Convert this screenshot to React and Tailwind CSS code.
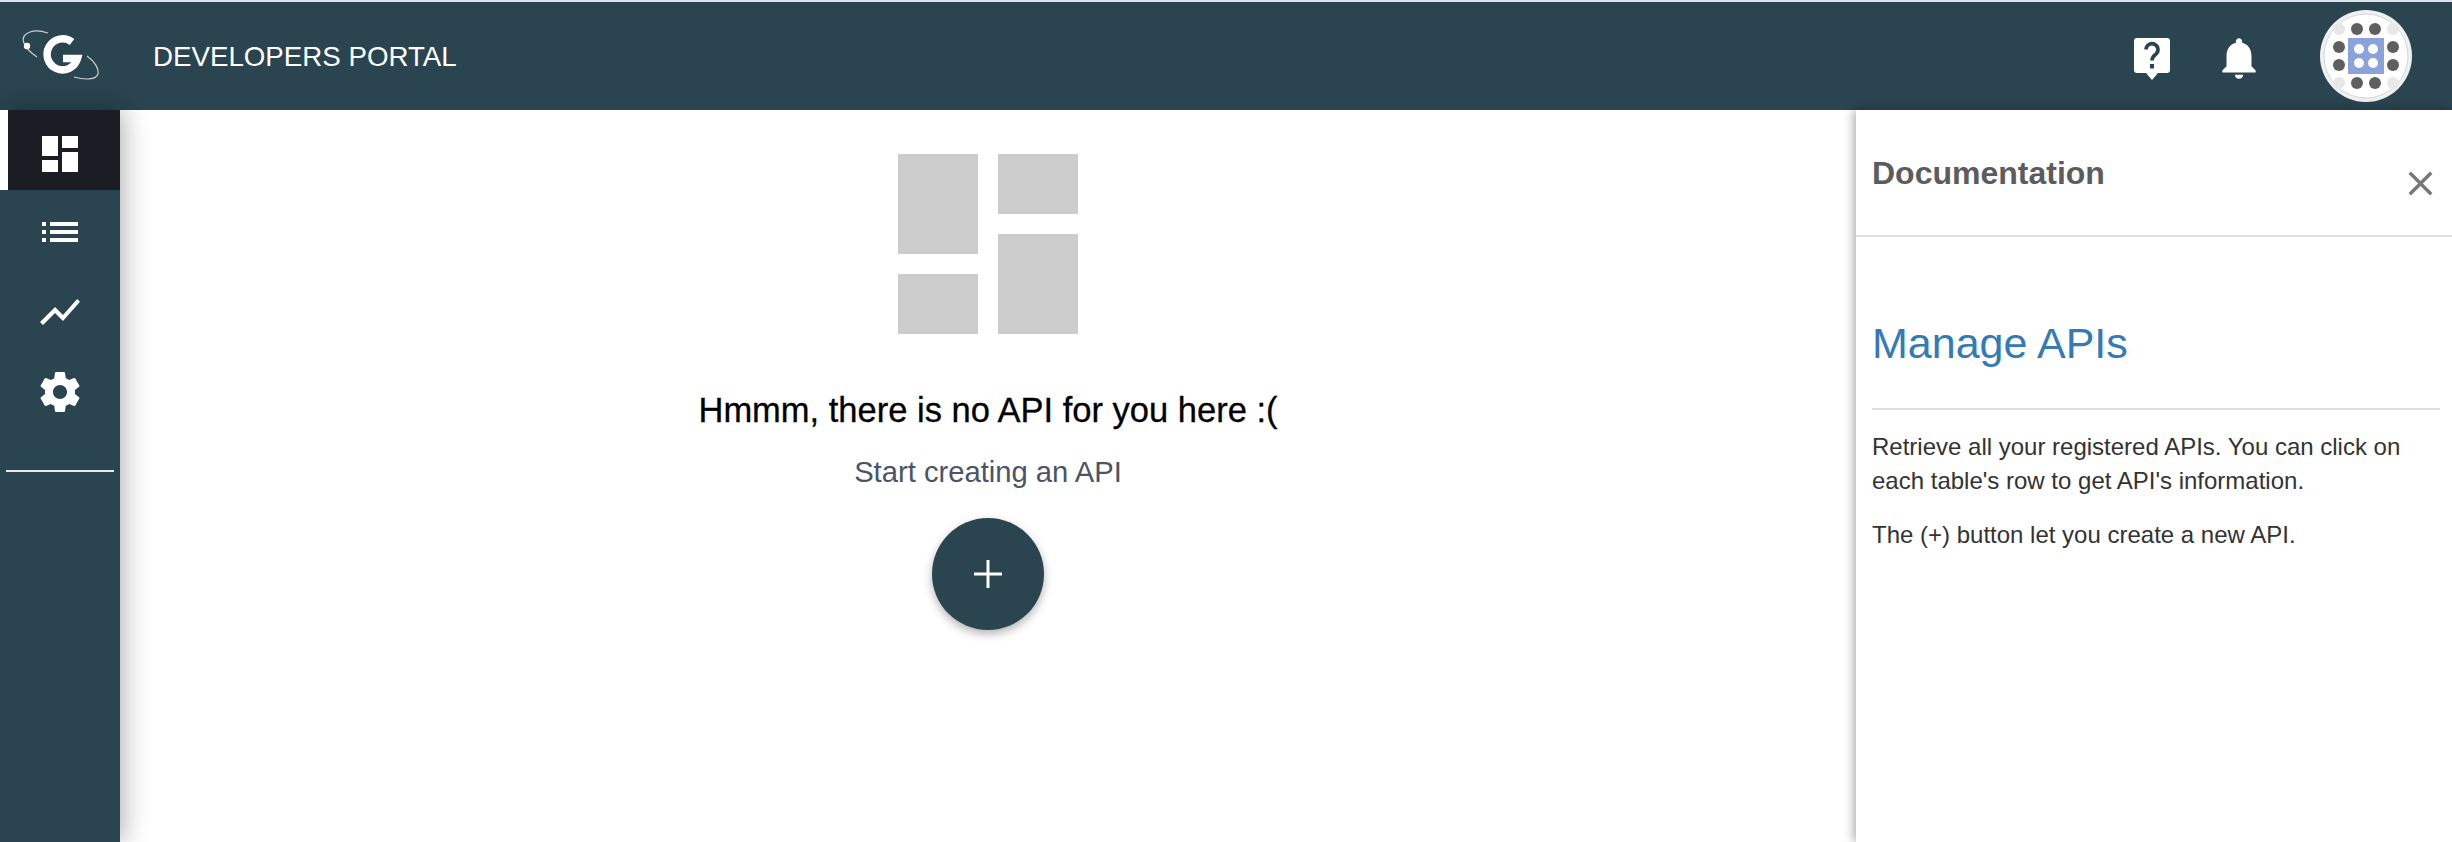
const DASHBOARD = 'M3 13h8V3H3v10zm0 8h8v-6H3v6zm10 0h8V11h-8v10zm0-18v6h8V3h-8z'
const PLUS = 'M19 12.75h-6.25V19h-1.5v-6.25H5v-1.5h6.25V5h1.5v6.25H19z'
const CLOSE = 'M19 6.41L17.59 5 12 10.59 6.41 5 5 6.41 10.59 12 5 17.59 6.41 19 12 13.41 17.59 19 19 17.59 13.41 12z'

function MdIcon({ d, className }) {
  return (
    <svg viewBox="0 0 24 24" className={className} fill="currentColor">
      <path d={d} />
    </svg>
  )
}

function Logo() {
  return (
    <svg viewBox="0 0 95 70" className="w-[95px] h-[70px]" fill="none" stroke="#fff">
      <path d="M33 13 C27 11 20 10 15 12 C9 14 7 18 9 23 C11 28 16 33 22 37" strokeWidth="1.2" opacity="0.75" />
      <circle cx="12" cy="26" r="3.2" fill="#fff" stroke="none" />
      <path d="M57 22 A15.5 15.5 0 1 0 62.5 38.500 L48 38.500" strokeWidth="7.5" />
      <path d="M72 36 C79 41 84 48 83 54 C81 60 70 60 59 57" strokeWidth="1.2" opacity="0.75" />
    </svg>
  )
}

function Avatar() {
  const dots = [
    [37, 19], [55, 19], [19, 37], [73, 37], [19, 55], [73, 55], [37, 73], [55, 73],
  ]
  const faded = [[19, 19], [73, 19], [19, 73], [73, 73]]
  const inner = [[39, 39], [53, 39], [39, 53], [53, 53]]
  return (
    <svg viewBox="0 0 92 92" className="w-[92px] h-[92px]">
      <circle cx="46" cy="46" r="46" fill="#f0f0f0" />
      <circle cx="46" cy="46" r="42" fill="#fff" stroke="#cfd8dc" strokeWidth="1" />
      {faded.map(([x, y]) => <circle key={`${x}-${y}`} cx={x} cy={y} r="6" fill="#e8e8e8" />)}
      {dots.map(([x, y]) => <circle key={`${x}-${y}`} cx={x} cy={y} r="6" fill="#5f5f5f" />)}
      <rect x="28" y="28" width="36" height="36" fill="#8aa4da" />
      {inner.map(([x, y]) => <circle key={`${x}-${y}`} cx={x} cy={y} r="5" fill="#fff" />)}
    </svg>
  )
}

export default function App() {
  return (
    <div className="h-[842px] flex flex-col overflow-hidden bg-white font-['Liberation_Sans',sans-serif]">
      <div className="h-[2px] shrink-0 bg-[#dfe3e6]" />
      <header className="h-[108px] shrink-0 flex items-center bg-[#2a4450] text-white">
        <div className="ml-[15px] mt-[-2px]"><Logo /></div>
        <span className="ml-[43px] text-[27.7px] mt-[1px]">DEVELOPERS PORTAL</span>
        <div className="ml-auto flex items-center">
          <svg viewBox="0 0 36 43" className="w-[36px] h-[43px] mt-[6px]">
            <path d="M3 0h30a3 3 0 0 1 3 3v29a3 3 0 0 1-3 3h-9l-6 7-6-7H3a3 3 0 0 1-3-3V3a3 3 0 0 1 3-3z" fill="#fff" />
            <path d="M12 11.5a6 6 0 1 1 9.5 5c-2.500 1.800-3.500 3-3.500 6" fill="none" stroke="#2a4450" strokeWidth="3.6" />
            <rect x="16" y="26" width="4" height="4.500" fill="#2a4450" />
          </svg>
          <MdIcon
            d="M12 22c1.100 0 2-.9 2-2h-4c0 1.100.9 2 2 2zm6-6v-5c0-3.070-1.630-5.640-4.500-6.320V4c0-.83-.67-1.500-1.500-1.500s-1.500.67-1.500 1.500v.68C7.640 5.360 6 7.920 6 11v5l-2 2v1h16v-1l-2-2z"
            className="ml-[44px] mr-[56px] w-[50px] h-[50px] mt-[4px] text-white"
          />
          <div className="mr-[40px]"><Avatar /></div>
        </div>
      </header>

      <div className="flex-1 flex min-h-0">
        <nav className="relative z-10 w-[120px] shrink-0 bg-[#2a4450] text-white shadow-[4px_0_24px_rgba(0,0,0,0.3)]">
          <div className="h-[80px] border-l-[8px] border-white bg-[#1c1c24] flex items-center justify-center pr-[8px] pt-[8px]">
            <MdIcon d={DASHBOARD} className="w-[48px] h-[48px]" />
          </div>
          <div className="h-[80px] flex items-center justify-center pt-[4px]">
            <svg viewBox="0 0 36 20" className="w-[36px] h-[20px]" fill="currentColor">
              <rect width="4" height="4" />
              <rect x="8" width="28" height="4" />
              <rect y="8" width="4" height="4" />
              <rect x="8" y="8" width="28" height="4" />
              <rect y="16" width="4" height="4" />
              <rect x="8" y="16" width="28" height="4" />
            </svg>
          </div>
          <div className="h-[80px] flex items-center justify-center pt-[4px]">
            <MdIcon d="M3.500 18.490l6-6.010 4 4L22 6.920l-1.410-1.410-7.090 7.970-4-4L2 16.990z" className="w-[48px] h-[48px]" />
          </div>
          <div className="h-[80px] flex items-center justify-center pt-[4px]">
            <MdIcon d="M19.430 12.980c.04-.32.07-.64.07-.98s-.03-.66-.07-.98l2.110-1.650c.19-.15.24-.42.12-.64l-2-3.460c-.12-.22-.39-.3-.61-.22l-2.490 1c-.52-.4-1.080-.73-1.690-.98l-.38-2.650C14.460 2.180 14.250 2 14 2h-4c-.25 0-.46.18-.49.42l-.38 2.650c-.61.25-1.170.59-1.690.98l-2.490-1c-.23-.09-.49 0-.61.22l-2 3.460c-.13.22-.07.49.12.64l2.110 1.650c-.04.32-.07.65-.07.98s.03.66.07.98l-2.110 1.650c-.19.15-.24.42-.12.64l2 3.460c.12.22.39.3.61.22l2.490-1c.52.4 1.080.73 1.690.98l.38 2.650c.03.24.24.42.49.42h4c.25 0 .46-.18.49-.42l.38-2.650c.61-.25 1.170-.59 1.690-.98l2.490 1c.23.09.49 0 .61-.22l2-3.460c.12-.22.07-.49-.12-.64l-2.110-1.650zM12 15.500c-1.930 0-3.500-1.570-3.500-3.500s1.570-3.500 3.500-3.500 3.500 1.570 3.500 3.500-1.570 3.500-3.500 3.500z" className="w-[48px] h-[48px]" />
          </div>
          <div className="mt-[40px] mx-[6px] h-[2px] bg-[#e8e8e8]" />
        </nav>

        <main className="flex-1 min-w-0 flex flex-col items-center pt-[14px]">
          <MdIcon d={DASHBOARD} className="w-[240px] h-[240px] text-[#cccccc]" />
          <h1 className="mt-[24px] text-[34.5px] leading-[44px] text-black [-webkit-text-stroke:0.3px_black]">Hmmm, there is no API for you here :(</h1>
          <p className="mt-[20px] text-[29.2px] leading-[40px] text-[#4a5568]">Start creating an API</p>
          <button className="mt-[26px] w-[112px] h-[112px] rounded-full bg-[#2a4450] text-white flex items-center justify-center shadow-[0_4px_10px_rgba(0,0,0,0.3)]">
            <MdIcon d={PLUS} className="w-[48px] h-[48px]" />
          </button>
        </main>

        <aside className="relative z-10 w-[596px] shrink-0 bg-white shadow-[-2px_0_10px_rgba(0,0,0,0.35)]">
          <div className="h-[127px] flex items-start justify-between border-b-2 border-[#dee2e6] pl-[16px] pr-[11px]">
            <h2 className="mt-[45px] text-[32px] leading-[36px] font-bold text-[#5c5c5f]">Documentation</h2>
            <MdIcon d={CLOSE} className="mt-[53px] w-[41px] h-[41px] text-[#777777]" />
          </div>
          <div className="pl-[16px] pr-[12px]">
            <h3 className="mt-[82px] text-[43px] leading-[48px] text-[#337ab7]">Manage APIs</h3>
            <div className="mt-[41px] h-[2px] bg-[#dddddd]" />
            <p className="mt-[20px] text-[24px] leading-[34px] text-[#333333]">Retrieve all your registered APIs. You can click on each table's row to get API's information.</p>
            <p className="mt-[20px] text-[24px] leading-[34px] text-[#333333]">The (+) button let you create a new API.</p>
          </div>
        </aside>
      </div>
    </div>
  )
}
